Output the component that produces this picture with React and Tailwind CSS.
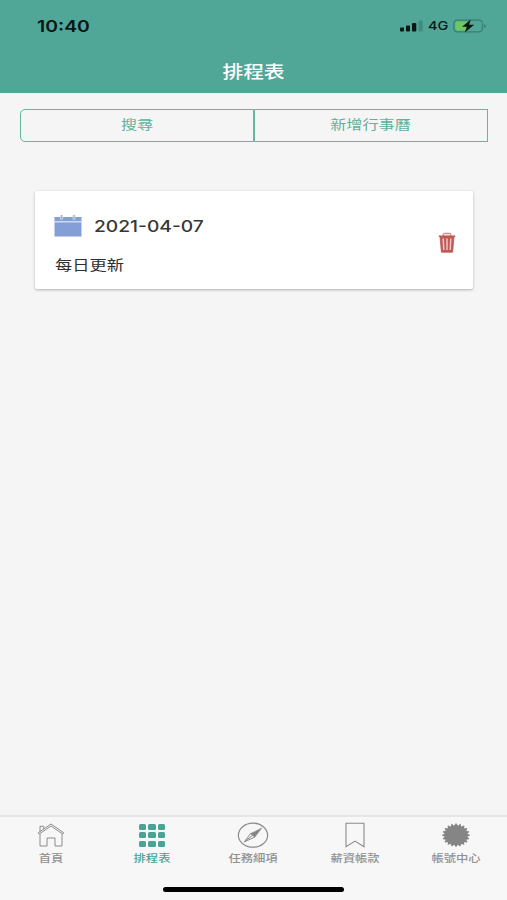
import React from "react";

const cjk = "font-['Inter','Noto_Sans_CJK_TC',sans-serif]";

function HomeIcon() {
  return (
    <svg width="28" height="26" viewBox="0 0 28 26" fill="none" stroke="#8c8c8c" strokeWidth="1" strokeLinejoin="round">
      <path d="M1.2 10.8 14 2l12.8 8.8-1 1.2L14 4 2.2 12z" />
      <path d="M3 9.5V4.3h3.8V6.8" />
      <path d="M3 11.5V24h7v-8h8v8h7V11.5" />
    </svg>
  );
}

function GridIcon() {
  return (
    <div className="grid h-[26px] grid-cols-3 content-center gap-x-[2px] gap-y-[2.5px]">
      {Array.from({ length: 9 }, (_, i) => (
        <span key={i} className="h-[6px] w-[7.3px] rounded-[1.5px] bg-[#4ba393]" />
      ))}
    </div>
  );
}

function CompassIcon() {
  return (
    <svg width="32" height="26" viewBox="0 0 32 26" fill="none" stroke="#8b8b8b">
      <ellipse cx="16" cy="13.2" rx="14.6" ry="12" strokeWidth="1.2" />
      <path d="M24.8 6 13.6 11.6 18 15z" fill="#858585" strokeWidth="0.6" />
      <path d="M7.3 19.8 13.6 11.6 18 15z" strokeWidth="1" />
      <path d="M7.3 19.8 15.8 13.2" strokeWidth="1" />
    </svg>
  );
}

function BookmarkIcon() {
  return (
    <svg width="22" height="26" viewBox="0 0 22 26" fill="none" stroke="#8b8b8b" strokeWidth="1.1">
      <path d="M2 1.3h18v23.4l-9-5.6-9 5.6z" />
    </svg>
  );
}

const gearPoints = Array.from({ length: 80 }, (_, i) => {
  const angle = ((i - 0.5) * Math.PI * 2) / 80 - Math.PI / 2;
  const r = i % 4 < 2 ? 1 : 0.86;
  return `${(14 + 13.8 * r * Math.cos(angle)).toFixed(2)},${(13.2 + 11.6 * r * Math.sin(angle)).toFixed(2)}`;
}).join(" ");

function GearIcon() {
  return (
    <svg width="28" height="26" viewBox="0 0 28 26">
      <polygon points={gearPoints} fill="#858585" />
    </svg>
  );
}

function CalendarIcon() {
  return (
    <svg width="28" height="24" viewBox="0 0 28 24">
      <path d="M.5 3h27v19.5H.5z" fill="#839fd5" />
      <path d="M.5 7.8h27" stroke="#dce5f6" strokeWidth="1.3" />
      <path d="M7.5 1v4.5M20 1v4.5" stroke="#dce5f6" strokeWidth="2.6" />
      <path d="M7.5 1v4M20 1v4" stroke="#8fa9da" strokeWidth="1.2" />
    </svg>
  );
}

function TrashIcon() {
  return (
    <svg width="18" height="22" viewBox="0 0 18 22">
      <path d="M5.2 4V2.2q0-.9 1-.9h5.6q1 0 1 .9V4" fill="#f6e3e0" stroke="#c9776c" strokeWidth="1" />
      <path d="M.8 4.2h16.4" stroke="#bd5952" strokeWidth="1.5" />
      <path d="M2 4.7h14l-1.4 15.5H3.4z" fill="#c05b58" stroke="#bb5552" strokeWidth=".8" />
      <path d="M5.2 6.5 5.8 18M9 6.5V18M12.8 6.5 12.2 18" stroke="#efc4c1" strokeWidth="1.5" />
    </svg>
  );
}

function SignalIcon() {
  return (
    <svg width="23" height="12" viewBox="0 0 23 12">
      <rect y="7.5" width="4" height="4" rx=".9" fill="#071714" />
      <rect x="6" y="5.5" width="4" height="6" rx=".9" fill="#071714" />
      <rect x="12" y="3" width="4.3" height="8.5" rx=".9" fill="#071714" />
      <rect x="18.5" y=".5" width="4.2" height="11" rx=".9" fill="#418b7d" />
    </svg>
  );
}

function BatteryIcon() {
  return (
    <svg width="34" height="14" viewBox="0 0 34 14">
      <rect x=".9" y="1.2" width="28.4" height="11.6" rx="3.2" fill="none" stroke="#3a7f72" strokeWidth="1.2" />
      <path d="M4.2 2.6H14v8.8H4.2q-1.8 0-1.8-1.8V4.4q0-1.8 1.8-1.8z" fill="#6cc860" />
      <path d="M30.8 4.9q2.2.7 2.2 2.1t-2.2 2.1z" fill="#3a7f72" />
      <path d="M17.8.4 9 7.8h4.8L11.8 13.6l9.4-7.9h-5.1z" fill="#071714" />
    </svg>
  );
}

const tabs = [
  { label: "首頁", Icon: HomeIcon },
  { label: "排程表", Icon: GridIcon, active: true },
  { label: "任務細項", Icon: CompassIcon },
  { label: "薪資帳款", Icon: BookmarkIcon },
  { label: "帳號中心", Icon: GearIcon },
];

export default function App() {
  return (
    <div className={`flex h-[900px] w-[507px] flex-col overflow-hidden bg-[#f5f5f5] ${cjk}`}>
      <header className="flex h-[93px] shrink-0 flex-col bg-[#51a797]">
        <div className="flex h-[52px] items-center pr-[20px] pl-[37px] text-[#071714]">
          <span className="origin-left scale-x-[1.21] text-[16px] leading-none font-semibold">10:40</span>
          <div className="ml-auto flex items-center">
            <SignalIcon />
            <span className="ml-[5px] w-[25px] origin-left scale-x-[1.21] text-[12px] leading-none font-medium">4G</span>
            <BatteryIcon />
          </div>
        </div>
        <h1 className="mt-[2px] flex h-[38px] items-center justify-center text-[17px] font-medium text-white">
          <span className="scale-x-[1.22]">排程表</span>
        </h1>
      </header>

      <div className="mt-[16px] ml-[20px] flex h-[33px] w-[468px] shrink-0 text-[13px] text-[#62b09d]">
        <button className="flex w-[234px] items-center justify-center rounded-l-[5px] border border-[#66b5a1] pb-[1px]">
          <span className="scale-x-[1.24]">搜尋</span>
        </button>
        <button className="flex w-[234px] items-center justify-center border border-[#66b5a1] pb-[1px]">
          <span className="scale-x-[1.24]">新增行事曆</span>
        </button>
      </div>

      <section className="mx-[35px] mt-[49px] flex h-[98px] w-[438px] shrink-0 items-center rounded-[2px] bg-white pr-[17px] pl-[19px] shadow-[0_1px_3px_rgba(0,0,0,0.28)]">
        <div className="flex h-full flex-col pt-[21px]">
          <div className="flex h-[28px] items-center">
            <CalendarIcon />
            <span className="ml-[12px] origin-left scale-x-[1.2] text-[16px] font-medium text-[#373737]">2021-04-07</span>
          </div>
          <div className="mt-[14px] ml-[1px] flex h-[20px] origin-left scale-x-[1.23] items-center text-[14px] text-[#303030]">每日更新</div>
        </div>
        <button className="mt-[5px] ml-auto"><TrashIcon /></button>
      </section>

      <footer className="mt-auto flex h-[85px] shrink-0 flex-col border-t-2 border-[#e5e5e5] bg-[#f7f7f7]">
        <nav className="grid h-[54px] grid-cols-5 pt-[5px]">
          {tabs.map(({ label, Icon, active }) => (
            <div key={label} className={`flex flex-col items-center text-[10px] leading-[14px] font-medium ${active ? "text-[#4ba393]" : "text-[#919191]"}`}>
              <Icon />
              <span className="mt-[3px] scale-x-[1.23]">{label}</span>
            </div>
          ))}
        </nav>
        <div className="mx-auto mt-[16px] h-[5px] w-[181px] rounded-full bg-black" />
      </footer>
    </div>
  );
}
